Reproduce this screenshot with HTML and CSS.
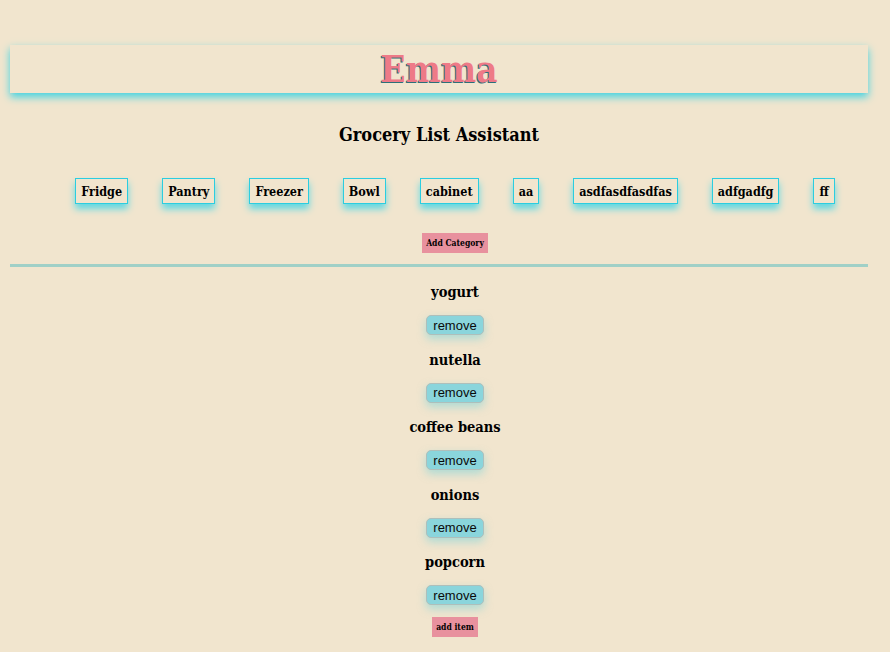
FILE: index.html
```html
<!DOCTYPE html>
<html>
<head>
<meta charset="utf-8">
<link rel="stylesheet" href="styles.css">
</head>
<body>
<div class="page">
  <header class="banner"><h1 class="brand">Emma</h1></header>
  <h2 class="subtitle">Grocery List Assistant</h2>
  <nav class="cats">
    <button class="cat">Fridge</button>
    <button class="cat">Pantry</button>
    <button class="cat">Freezer</button>
    <button class="cat">Bowl</button>
    <button class="cat">cabinet</button>
    <button class="cat">aa</button>
    <button class="cat">asdfasdfasdfas</button>
    <button class="cat">adfgadfg</button>
    <button class="cat">ff</button>
  </nav>
  <div class="center"><button class="pink add-cat">Add Category</button></div>
  <hr class="rule">
  <ul class="items">
    <li class="item"><span class="name">yogurt</span><button class="remove">remove</button></li>
    <li class="item"><span class="name">nutella</span><button class="remove">remove</button></li>
    <li class="item"><span class="name">coffee beans</span><button class="remove">remove</button></li>
    <li class="item"><span class="name">onions</span><button class="remove">remove</button></li>
    <li class="item"><span class="name">popcorn</span><button class="remove">remove</button></li>
  </ul>
  <div class="center"><button class="pink add-item">add item</button></div>
</div>
</body>
</html>
```
FILE: styles.css
```css
html, body { margin: 0; padding: 0; background: #f1e5ce; }
body { font-family: "DejaVu Serif Condensed", "DejaVu Serif", serif; font-stretch: condensed; color: #000; }
.page { width: 858px; margin-left: 10px; padding-top: 45px; padding-bottom: 40px; }
.banner {
  height: 48px; display: flex; align-items: center; justify-content: center;
  box-shadow: 0 4px 8px #41d3e2;
}
.brand {
  margin: 0; font-size: 37px; font-weight: bold; color: #ee7a87; line-height: 1;
  text-shadow: -1px 1px 0 #2c6f78;
}
.subtitle { margin: 31px 0 0; text-align: center; font-size: 18px; font-weight: bold; line-height: 22px; }
.cats { display: flex; justify-content: center; gap: 34px; padding-left: 32px; margin-top: 32px; }
.cat {
  font-family: inherit; font-stretch: condensed; font-size: 12.5px; font-weight: bold; background: transparent;
  border: 1px solid #2bcde0; height: 26px; padding: 0 5px; color: #000;
  box-shadow: 0 5px 7px #5fd8e3;
}
.center { display: flex; justify-content: center; padding-left: 32px; }
.pink {
  font-family: inherit; font-stretch: condensed; background: #e8919e; border: 0; color: #000; font-weight: bold;
  font-size: 8.5px; padding: 0 4px;
}
.add-cat { margin-top: 29px; height: 20px; }
.rule { margin: 11px 0 0; height: 3px; border: 0; background: #a0d0c7; }
.items { list-style: none; margin: 0; padding: 0 0 0 32px; }
.item { display: flex; flex-direction: column; align-items: center; }
.name { font-size: 14.5px; font-weight: bold; line-height: 20px; margin-top: 14.5px; }
.item:first-child .name { margin-top: 15px; }
.remove {
  margin-top: 13px; font-family: "Liberation Sans", Arial, sans-serif; font-size: 13px;
  background: #8ad5dc; border: 1px solid #aebfbb; border-radius: 5px; height: 20px; padding: 0 6px; color: #0a0a0a;
  box-shadow: 0 4px 8px rgba(110, 210, 220, 0.5);
}
.add-item { margin-top: 12px; height: 20px; }
```
